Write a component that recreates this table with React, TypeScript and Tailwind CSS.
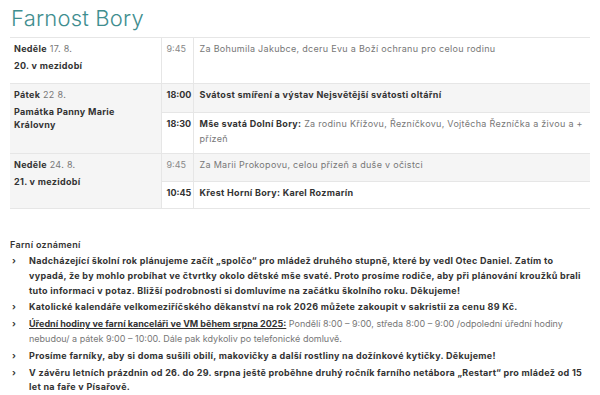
const font = { fontFamily: 'Inter, "Noto Sans", sans-serif' };

type Slot = { time: string; bold?: boolean; title?: string; text?: string; h: number };
type Day = { day: string; date: string; name: string; slots: Slot[] };

const days: Day[] = [
  {
    day: 'Neděle',
    date: '17. 8.',
    name: '20. v mezidobí',
    slots: [{ time: '9:45', text: 'Za Bohumila Jakubce, dceru Evu a Boží ochranu pro celou rodinu', h: 46 }],
  },
  {
    day: 'Pátek',
    date: '22 8.',
    name: 'Památka Panny Marie Královny',
    slots: [
      { time: '18:00', bold: true, title: 'Svátost smíření a výstav Nejsvětější svátosti oltářní', h: 29 },
      {
        time: '18:30',
        bold: true,
        title: 'Mše svatá Dolní Bory:',
        text: ' Za rodinu Křížovu, Řezníčkovu, Vojtěcha Řezníčka a živou a + příze\u0148',
        h: 41,
      },
    ],
  },
  {
    day: 'Neděle',
    date: '24. 8.',
    name: '21. v mezidobí',
    slots: [
      { time: '9:45', text: 'Za Marii Prokopovu, celou příze\u0148 a duše v očistci', h: 28 },
      { time: '10:45', bold: true, title: 'Křest Horní Bory: Karel Rozmarín', h: 27 },
    ],
  },
];

function Arrow() {
  return <span className="absolute left-[-17px] top-0 font-bold text-[#333]">›</span>;
}

export default function App() {
  let stripe = 0;
  return (
    <div className="w-[600px] bg-white px-[10px] text-[9px] tracking-[0.3px] text-[#777]" style={font}>
      <h1 className="pl-[1px] pt-[4px] h-[37px] text-[22px] leading-[28px] font-light tracking-[0.2px] text-[#3f8e8f]">Farnost Bory</h1>

      <table className="w-[580px] border-collapse table-fixed">
        <colgroup>
          <col className="w-[151px]" />
          <col className="w-[32px]" />
          <col />
        </colgroup>
        <tbody>
          {days.map((d, di) =>
            d.slots.map((s, si) => {
              const bg = stripe++ % 2 === 1 ? 'bg-[#f5f5f5]' : 'bg-white';
              return (
                <tr key={`${di}-${si}`} className={`${bg} border-t border-[#e6e6e6] ${di === days.length - 1 && si === d.slots.length - 1 ? 'border-b' : ''}`}>
                  {si === 0 && (
                    <td rowSpan={d.slots.length} className="align-top border-r border-[#e6e6e6] pl-[4px] pr-[12px] pt-[3px]">
                      <div className="leading-[15px] text-[#777]">
                        <span className="font-bold text-[#333]">{d.day}</span> {d.date}
                      </div>
                      <div className="mt-[3px] leading-[13px] font-bold text-[#333]">{d.name}</div>
                    </td>
                  )}
                  <td className="align-top border-r border-[#e6e6e6] pl-[5px] pt-[4px] tracking-[0px]" style={{ height: s.h }}>
                    <span className={`leading-[14px] ${s.bold ? 'font-bold text-[#333]' : 'text-[#888]'}`}>{s.time}</span>
                  </td>
                  <td className="align-top pl-[6px] pr-[2px] pt-[4px] leading-[14.5px]">
                    {s.title && <span className="font-bold text-[#333]">{s.title}</span>}
                    {s.text && <span className="text-[#777]">{s.text}</span>}
                  </td>
                </tr>
              );
            })
          )}
        </tbody>
      </table>

      <div className="mt-[29px] font-semibold text-[#333] leading-[14px]">Farní oznámení</div>

      <ul className="mt-[2px] pl-[19px] pr-[4px] flex flex-col gap-[2px] leading-[14.8px]">
        <li className="relative font-bold text-[#333]">
          <Arrow />
          Nadcházející školní rok plánujeme začít „spolčo“ pro mládež druhého stupně, které by vedl Otec Daniel. Zatím to
          vypadá, že by mohlo probíhat ve čtvrtky okolo dětské mše svaté. Proto prosíme rodiče, aby při plánování kroužků brali
          tuto informaci v potaz. Bližší podrobnosti si domluvíme na začátku školního roku. Děkujeme!
        </li>
        <li className="relative font-bold text-[#333]">
          <Arrow />
          Katolické kalendáře velkomeziříčského děkanství na rok 2026 můžete zakoupit v sakristii za cenu 89 Kč.
        </li>
        <li className="relative text-[#777] tracking-[0px]">
          <Arrow />
          <span className="font-bold text-[#333] underline">Úřední hodiny ve farní kanceláři ve VM během srpna 2025:</span> Pondělí 8:00 – 9:00,
          středa 8:00 – 9:00 /odpolední úřední hodiny nebudou/ a pátek 9:00 – 10:00. Dále pak kdykoliv po telefonické domluvě.
        </li>
        <li className="relative font-bold text-[#333]">
          <Arrow />
          Prosíme farníky, aby si doma sušili obilí, makovičky a další rostliny na dožínkové kytičky. Děkujeme!
        </li>
        <li className="relative font-bold text-[#333]">
          <Arrow />
          V závěru letních prázdnin od 26. do 29. srpna ještě proběhne druhý ročník farního netábora „Restart“ pro mládež od 15
          let na faře v Písařově.
        </li>
      </ul>
    </div>
  );
}
